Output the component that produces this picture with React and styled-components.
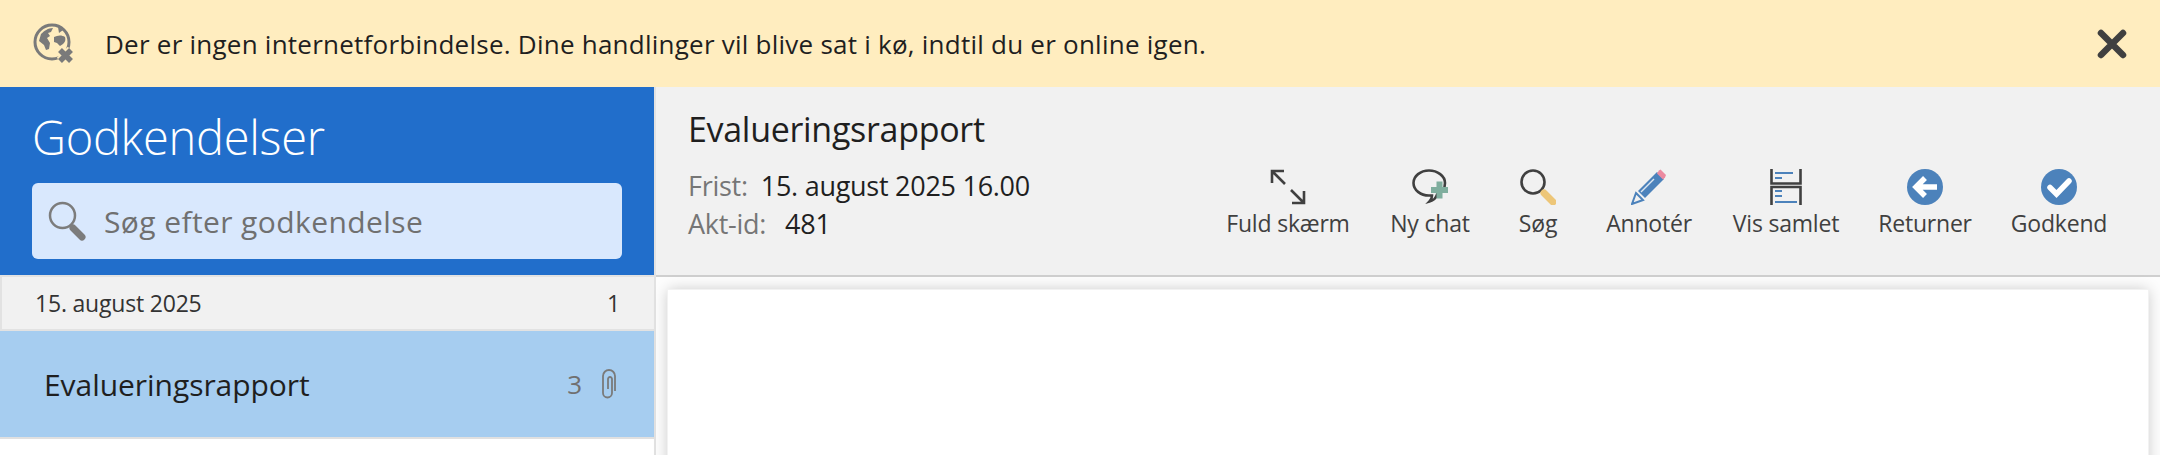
import React from 'react';
import styled, { createGlobalStyle } from 'styled-components';

const Global = createGlobalStyle`
  html, body { margin: 0; padding: 0; background: #fff; overflow: hidden; }
  * { box-sizing: border-box; }
  body { font-family: "Open Sans", "Noto Sans", sans-serif; }
`;

const Page = styled.div`
  width: 2160px;
  height: 455px;
  display: flex;
  flex-direction: column;
  overflow: hidden;
`;

const Banner = styled.div`
  height: 87px;
  flex: none;
  display: flex;
  align-items: center;
  padding: 0 32px 0 33px;
  background: #ffedbf;
`;

const BannerText = styled.span`
  flex: 1;
  margin-left: 30px;
  font-size: 26px;
  letter-spacing: 0.24px;
  color: #1f1f1f;
`;

const Body = styled.div`
  flex: 1;
  display: flex;
  min-height: 0;
`;

const Sidebar = styled.aside`
  width: 656px;
  flex: none;
  display: flex;
  flex-direction: column;
  border-right: 2px solid #e2e2e2;
  background: #fff;
`;

const SidebarHead = styled.div`
  height: 188px;
  flex: none;
  padding: 0 32px;
  background: #216ecb;
`;

const SidebarTitle = styled.h1`
  margin: 0;
  height: 96px;
  line-height: 100px;
  font-size: 47px;
  font-weight: 300;
  letter-spacing: -0.3px;
  color: #fff;
`;

const SearchBox = styled.div`
  height: 76px;
  display: flex;
  align-items: center;
  padding-left: 16px;
  gap: 18px;
  border-radius: 6px;
  background: #d9e8fd;
`;

const SearchIcon = styled.svg`
  width: 38px;
  height: 40px;
  flex: none;
`;

const Placeholder = styled.span`
  font-size: 30px;
  font-weight: 400;
  letter-spacing: 0.4px;
  color: #707070;
`;

const GroupRow = styled.div`
  height: 56px;
  flex: none;
  display: flex;
  align-items: center;
  justify-content: space-between;
  padding: 0 34px 0 33px;
  background: #f1f1f1;
  border: 2px solid #e2e2e2;
  border-right-width: 0;
  font-size: 23px;
  letter-spacing: -0.2px;
  color: #333;
`;

const ItemRow = styled.div`
  height: 108px;
  flex: none;
  display: flex;
  align-items: center;
  padding: 0 38px 0 44px;
  background: #a6cdf0;
  border-bottom: 2px solid #e0e0e0;
`;

const ItemName = styled.span`
  flex: 1;
  font-size: 30px;
  letter-spacing: -0.05px;
  color: #1f1f1f;
`;

const ItemCount = styled.span`
  margin-right: 20px;
  font-size: 26px;
  color: #707070;
`;

const Main = styled.main`
  flex: 1;
  display: flex;
  flex-direction: column;
  min-width: 0;
  background: #fdfdfd;
`;

const Header = styled.header`
  height: 190px;
  flex: none;
  display: flex;
  align-items: flex-end;
  justify-content: space-between;
  padding: 0 32px;
  background: #f1f1f1;
  border-bottom: 2px solid #cfcfcf;
`;

const Info = styled.div`
  align-self: stretch;
  display: flex;
  flex-direction: column;
`;

const DocTitle = styled.h2`
  margin: 19px 0 14px;
  font-size: 34px;
  font-weight: 400;
  line-height: 46px;
  letter-spacing: -0.3px;
  color: #1f1f1f;
`;

const MetaRow = styled.div`
  display: flex;
  height: 38px;
  align-items: center;
  gap: ${p => p.$gap}px;
  font-size: 27px;
  letter-spacing: -0.27px;
  color: #1f1f1f;
`;

const MetaLabel = styled.span`
  color: #767676;
`;

const Toolbar = styled.div`
  display: flex;
  margin-right: 1px;
  padding-bottom: 34px;
`;

const Tool = styled.div`
  width: ${p => p.$width}px;
  display: flex;
  flex-direction: column;
  align-items: center;
`;

const ToolIcon = styled.svg`
  width: 36px;
  height: 36px;
  display: block;
`;

const ToolLabel = styled.span`
  font-size: 23px;
  line-height: 36px;
  letter-spacing: -0.2px;
  white-space: nowrap;
  color: #404040;
`;

const Viewer = styled.div`
  flex: 1;
  min-height: 0;
  padding: 13px 12px 0;
`;

const Sheet = styled.div`
  height: 300px;
  background: #fff;
  box-shadow: 0 0 0 1px #f2f2f2, 0 0 14px rgba(0, 0, 0, 0.22);
`;

const dark = '#404040';
const blue = '#4c82bb';

const GlobeOff = () => (
  <svg width="42" height="42" viewBox="0 0 42 42">
    <circle cx="19" cy="19" r="17" fill="none" stroke="#7a7a7a" strokeWidth="3" />
    <path d="M8 11c3-3 7-6 12-6l-2 4-3 1 2 3-3 2 3 5-1 6-3 1-2-5-5-4z" fill="#7a7a7a" />
    <path d="M21 14c4-2 8-2 11 0 1 3 0 5-2 7l-3 2-3-3-3-1z" fill="#7a7a7a" />
    <path d="M25 4l5 3-4 3z" fill="#7a7a7a" />
    <path d="M27 27l11 11M38 27L27 38" stroke="#ffedbf" strokeWidth="9" />
    <path d="M27 27l11 11M38 27L27 38" stroke="#7a7a7a" strokeWidth="5.5" />
  </svg>
);

const Close = () => (
  <svg width="32" height="32" viewBox="0 0 32 32">
    <path d="M5 5l22 22M27 5L5 27" stroke={dark} strokeWidth="6.5" strokeLinecap="round" />
  </svg>
);

const SearchGlass = () => (
  <SearchIcon viewBox="0 0 38 40">
    <circle cx="14.5" cy="14.5" r="12.5" fill="none" stroke="#7c7c7c" strokeWidth="2.5" />
    <path d="M24 24l11 11" stroke="#7c7c7c" strokeWidth="1.5" />
    <path d="M25 27l9 9" stroke="#7c7c7c" strokeWidth="7" strokeLinecap="round" />
  </SearchIcon>
);

const Clip = () => (
  <svg width="14" height="30" viewBox="0 0 14 30">
    <path
      d="M13 22V7a6 6 0 0 0-12 0v17a4.500 4.500 0 0 0 9 0V10a2 2 0 0 0-4 0v10"
      fill="none"
      stroke="#7a7a7a"
      strokeWidth="1.8"
    />
  </svg>
);

const tools = [
  {
    label: 'Fuld skærm',
    width: 162,
    icon: <path d="M2 14V2h12M2 2l13 13M34 22v12H22M34 34L21 21" fill="none" stroke={dark} strokeWidth="2.6" />,
  },
  {
    label: 'Ny chat',
    width: 122,
    icon: (
      <>
        <path
          d="M17 1.500C8.500 1.500 1.500 7 1.500 14s7 12.500 15.500 12.500h3c0 2.500-1 4.500-2.500 6 4-1 6.500-3.500 7.500-7 5.500-2 8-6.500 8-11.500C33 7 25.500 1.500 17 1.500z"
          fill="none"
          stroke={dark}
          strokeWidth="2.6"
        />
        <path d="M19 21h17M27.500 12.500v17" stroke="#7fae9e" strokeWidth="6" />
      </>
    ),
  },
  {
    label: 'Søg',
    width: 94,
    icon: (
      <>
        <circle cx="13" cy="13" r="11.500" fill="none" stroke={dark} strokeWidth="2.600" />
        <path d="M24 24l9 9" stroke="#edc678" strokeWidth="7" strokeLinecap="round" />
      </>
    ),
  },
  {
    label: 'Annotér',
    width: 128,
    icon: (
      <>
        <path d="M7 22L26 3l7 7-19 19z" fill={blue} />
        <path d="M28 1.500l1.500-1 5.500 5.500-1 2.500-2 2-6-6z" fill="#ec8aa0" />
        <path d="M5 24l7 7-11 4z" fill="none" stroke={blue} strokeWidth="2" />
        <path d="M10 23l13-13" stroke="#dbe6f1" strokeWidth="1.500" />
      </>
    ),
  },
  {
    label: 'Vis samlet',
    width: 146,
    icon: (
      <>
        <path d="M1.500 0v14.500h29V0M1.500 36V18h29v18" fill="none" stroke={dark} strokeWidth="2.600" />
        <path d="M5 4h18M5 9h7M5 22h7M5 27h7M5 33h22" stroke={blue} strokeWidth="2" />
      </>
    ),
    box: '0 0 32 36',
  },
  {
    label: 'Returner',
    width: 132,
    icon: (
      <>
        <circle cx="18" cy="18" r="18" fill={blue} />
        <path d="M30 18H12M18 9l-9 9 9 9" fill="none" stroke="#fff" strokeWidth="5.500" />
      </>
    ),
  },
  {
    label: 'Godkend',
    width: 136,
    icon: (
      <>
        <circle cx="18" cy="18" r="18" fill={blue} />
        <path d="M9 18.500l6.500 6.500L28 12" fill="none" stroke="#fff" strokeWidth="5.500" strokeLinecap="round" />
      </>
    ),
  },
];

export default function App() {
  return (
    <Page>
      <Global />
      <Banner>
        <GlobeOff />
        <BannerText>Der er ingen internetforbindelse. Dine handlinger vil blive sat i kø, indtil du er online igen.</BannerText>
        <Close />
      </Banner>
      <Body>
        <Sidebar>
          <SidebarHead>
            <SidebarTitle>Godkendelser</SidebarTitle>
            <SearchBox>
              <SearchGlass />
              <Placeholder>Søg efter godkendelse</Placeholder>
            </SearchBox>
          </SidebarHead>
          <GroupRow>
            <span>15. august 2025</span>
            <span>1</span>
          </GroupRow>
          <ItemRow>
            <ItemName>Evalueringsrapport</ItemName>
            <ItemCount>3</ItemCount>
            <Clip />
          </ItemRow>
        </Sidebar>
        <Main>
          <Header>
            <Info>
              <DocTitle>Evalueringsrapport</DocTitle>
              <MetaRow $gap={13}>
                <MetaLabel>Frist:</MetaLabel>
                <span>15. august 2025 16.00</span>
              </MetaRow>
              <MetaRow $gap={19}>
                <MetaLabel>Akt-id:</MetaLabel>
                <span>481</span>
              </MetaRow>
            </Info>
            <Toolbar>
              {tools.map(tool => (
                <Tool key={tool.label} $width={tool.width}>
                  <ToolIcon viewBox={tool.box || '0 0 36 36'}>{tool.icon}</ToolIcon>
                  <ToolLabel>{tool.label}</ToolLabel>
                </Tool>
              ))}
            </Toolbar>
          </Header>
          <Viewer>
            <Sheet />
          </Viewer>
        </Main>
      </Body>
    </Page>
  );
}
